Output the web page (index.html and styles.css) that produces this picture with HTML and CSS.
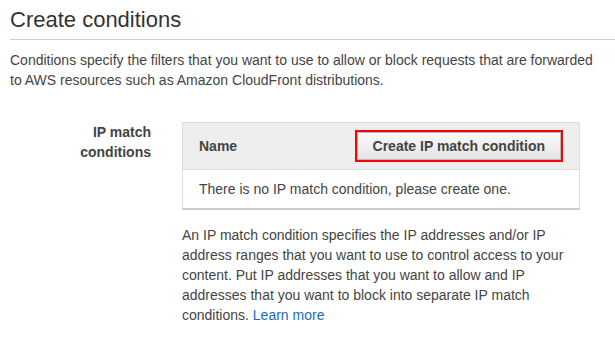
FILE: index.html
```html
<!DOCTYPE html>
<html lang="en">
<head>
    <meta charset="UTF-8">
    <title>Create conditions</title>
    <link rel="stylesheet" href="styles.css">
</head>
<body>
    <div class="page">
        <h1 class="titulo">Create conditions</h1>
        <p class="intro">Conditions specify the filters that you want to use to allow or block requests that are forwarded to AWS resources such as Amazon CloudFront distributions.</p>

        <div class="linha">
            <div class="rotulo">IP match<br>conditions</div>
            <div class="campo">
                <div class="tabela">
                    <div class="tabela-topo">
                        <span class="coluna">Name</span>
                        <button class="botao" type="button">Create IP match condition</button>
                    </div>
                    <div class="tabela-vazia">There is no IP match condition, please create one.</div>
                </div>
                <p class="ajuda">An IP match condition specifies the IP addresses and/or IP address ranges that you want to use to control access to your content. Put IP addresses that you want to allow and IP addresses that you want to block into separate IP match conditions. <a href="#" class="link">Learn more</a></p>
            </div>
        </div>
    </div>
</body>
</html>
```

FILE: styles.css
```css
body {
    margin: 0;
    background-color: #fff;
    font-family: 'Liberation Sans', Arial, sans-serif;
    font-size: 14px;
    line-height: 20px;
    color: #444;
}
.page {
    padding-left: 10px;
}
.titulo {
    margin: 0;
    padding: 7px 0 6px;
    font-size: 22px;
    line-height: 26px;
    font-weight: normal;
    color: #333;
    border-bottom: 1px solid #ccc;
}
.intro {
    margin: 10px 10px 0 0;
}
.linha {
    display: grid;
    grid-template-columns: 141px 398px;
    column-gap: 31px;
    margin-top: 32px;
}
.rotulo {
    text-align: right;
    font-weight: bold;
}
.tabela {
    border: 1px solid #ddd;
    border-bottom: 2px solid #ccc;
}
.tabela-topo {
    display: flex;
    align-items: center;
    justify-content: space-between;
    height: 46px;
    padding: 0 18px 0 16px;
    background-color: #eee;
    border-bottom: 1px solid #ddd;
}
.coluna {
    font-weight: bold;
}
.botao {
    height: 28px;
    padding: 0 15px;
    font-family: inherit;
    font-size: 14px;
    font-weight: bold;
    color: #444;
    background: linear-gradient(#fafafa, #e4e4e4);
    border: 1px solid #b8b8b8;
    border-radius: 0;
    outline: 2px solid #f00;
}
.tabela-vazia {
    padding: 9px 16px;
}
.ajuda {
    margin: 15px 0 0;
}
.link {
    color: #1a6cc0;
    text-decoration: none;
}
```
